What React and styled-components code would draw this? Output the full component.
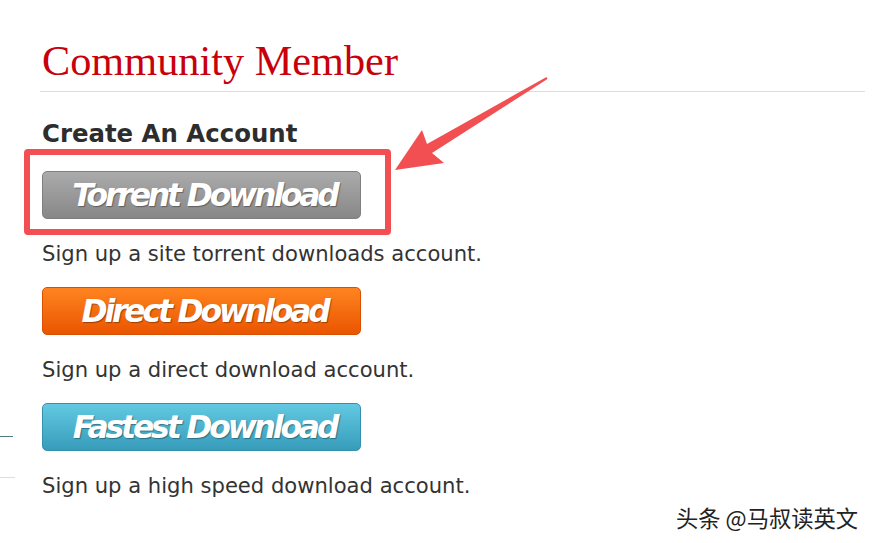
import React from "react";
import styled, { createGlobalStyle } from "styled-components";

const GlobalStyle = createGlobalStyle`
  html, body {
    margin: 0;
    padding: 0;
    background: #fff;
  }
  body {
    font-family: "DejaVu Sans", Verdana, sans-serif;
    width: 875px;
    height: 543px;
    overflow: hidden;
  }
`;

const buttons = [
  {
    label: "Torrent Download",
    note: "Sign up a site torrent downloads account.",
    top: "#ababab",
    bottom: "#878787",
    edge: "#7f7f7f",
  },
  {
    label: "Direct Download",
    note: "Sign up a direct download account.",
    top: "#ff8420",
    bottom: "#ea5500",
    edge: "#d85000",
  },
  {
    label: "Fastest Download",
    note: "Sign up a high speed download account.",
    top: "#63c9e2",
    bottom: "#379cba",
    edge: "#3590ad",
  },
];

const Page = () => (
  <Wrapper>
    <GlobalStyle />
    <Sidebar>
      <SideLine $color="#4f7c83" />
      <SideLine $color="#dedede" $gap="40px" $width="15px" />
    </Sidebar>
    <Main>
      <Title>Community Member</Title>
      <Rule />
      <Content>
        <Heading>Create An Account</Heading>
        {buttons.map((b) => (
          <Group key={b.label}>
            <DownloadButton $top={b.top} $bottom={b.bottom} $edge={b.edge}>
              {b.label}
            </DownloadButton>
            <Note>{b.note}</Note>
          </Group>
        ))}
      </Content>
    </Main>

    <Highlight />
    <Arrow width="875" height="543" viewBox="0 0 875 543">
      <polygon
        points="395,170 422,130 427,144 546.5,77 547.5,79 432,153 444,163"
        fill="#f24f52"
      />
    </Arrow>
    <Watermark>头条 @马叔读英文</Watermark>
  </Wrapper>
);

const Wrapper = styled.div`
  position: relative;
  display: flex;
  width: 875px;
  height: 543px;
`;

const Sidebar = styled.div`
  width: 15px;
  display: flex;
  flex-direction: column;
  padding-top: 436px;
`;

const SideLine = styled.div`
  height: 1px;
  width: ${(p) => p.$width || "13px"};
  margin-top: ${(p) => p.$gap || "0"};
  background: ${(p) => p.$color};
`;

const Main = styled.div`
  margin-left: 25px;
  width: 825px;
  display: flex;
  flex-direction: column;
`;

const Title = styled.h1`
  margin: 37px 0 0 2px;
  font-family: "Liberation Serif", Georgia, serif;
  font-weight: normal;
  font-size: 42.3px;
  line-height: 48px;
  color: #c8000b;
`;

const Rule = styled.div`
  margin-top: 6px;
  height: 1px;
  background: #dddddd;
`;

const Content = styled.div`
  padding-left: 2px;
  display: flex;
  flex-direction: column;
`;

const Heading = styled.h2`
  margin: 28px 0 23px;
  font-family: "DejaVu Sans", Verdana, sans-serif;
  font-weight: bold;
  font-size: 24.4px;
  line-height: 28px;
  color: #2d2d2d;
`;

const Group = styled.div`
  display: flex;
  flex-direction: column;
  margin-bottom: 21px;
`;

const DownloadButton = styled.div`
  box-sizing: border-box;
  width: 319px;
  height: 48px;
  border: 1px solid ${(p) => p.$edge};
  border-radius: 5px;
  background: linear-gradient(${(p) => p.$top}, ${(p) => p.$bottom});
  display: flex;
  align-items: center;
  justify-content: center;
  padding-left: 6px;
  font-family: "DejaVu Sans", Verdana, sans-serif;
  font-weight: bold;
  font-style: italic;
  font-size: 31.5px;
  line-height: 32px;
  letter-spacing: -3.2px;
  color: #fff;
  text-shadow: 1px 1px 1px rgba(0, 0, 0, 0.35);
`;

const Note = styled.p`
  margin: 23px 0 0;
  font-family: "DejaVu Sans", Verdana, sans-serif;
  font-size: 21.1px;
  line-height: 24px;
  color: #333;
`;

const Highlight = styled.div`
  position: absolute;
  left: 24px;
  top: 149px;
  width: 355px;
  height: 74px;
  border: 6px solid #f24f52;
  border-radius: 4px;
`;

const Arrow = styled.svg`
  position: absolute;
  left: 0;
  top: 0;
  pointer-events: none;
`;

const Watermark = styled.div`
  position: absolute;
  left: 676px;
  top: 503px;
  font-family: "Noto Sans CJK SC", sans-serif;
  font-size: 22.3px;
  line-height: 28px;
  color: #222;
  text-shadow: 1px 1px 0 #fff, -1px -1px 0 #fff;
`;

export default Page;
